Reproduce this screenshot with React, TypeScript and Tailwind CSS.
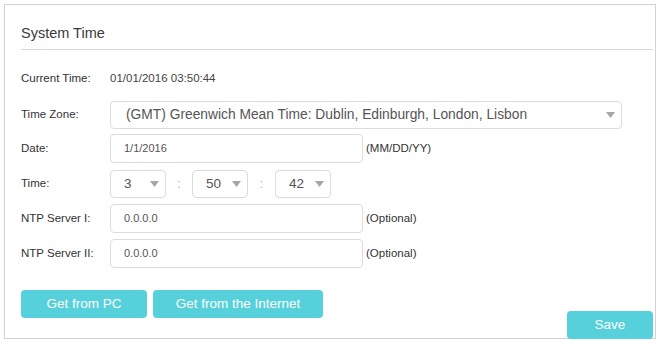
import React from "react";

const font = { fontFamily: '"Liberation Sans", Arial, sans-serif' };

function Caret() {
  return (
    <svg width="9" height="6" viewBox="0 0 9 6" className="shrink-0">
      <path d="M0 0 H9 L4.5 6 Z" fill="#a6a6a6" />
    </svg>
  );
}

function Field({ label, children }: { label: string; children: React.ReactNode }) {
  return (
    <div className="flex items-center">
      <div className="w-[89px] shrink-0 text-[11.5px] text-[#333]">{label}</div>
      {children}
    </div>
  );
}

function TextBox({ value }: { value: string }) {
  return (
    <div className="flex h-[29px] w-[253px] items-center rounded-[4px] border border-[#dcdcdc] pl-[13px] text-[11px] text-[#555]">
      {value}
    </div>
  );
}

function TimeSelect({ value }: { value: string }) {
  return (
    <div className="flex h-[28px] w-[56px] items-center justify-between rounded-[4px] border border-[#dcdcdc] pl-[13px] pr-[6px] text-[13.5px] text-[#555]">
      <span>{value}</span>
      <Caret />
    </div>
  );
}

export default function App() {
  return (
    <div className="min-h-[350px] bg-white p-1" style={font}>
      <div className="relative h-[335px] w-[652px] border border-[#d2d2d2] pl-4 pr-[2px]">
        <div className="mt-[18px] border-b border-[#d9d9d9] pb-[6px] text-[14.5px] leading-[20px] text-[#3a3a3a]">
          System Time
        </div>

        <div className="mt-[21px] flex h-4 items-center">
          <div className="w-[89px] text-[11.5px] text-[#333]">Current Time:</div>
          <div className="text-[11.5px] text-[#444]">01/01/2016 03:50:44</div>
        </div>

        <div className="mt-[14px]">
          <Field label="Time Zone:">
            <div className="flex h-[28px] w-[512px] items-center justify-between rounded-[4px] border border-[#dcdcdc] pl-[15px] pr-[6px] text-[13.8px] text-[#555]">
              <span>(GMT) Greenwich Mean Time: Dublin, Edinburgh, London, Lisbon</span>
              <Caret />
            </div>
          </Field>
        </div>

        <div className="mt-[5px]">
          <Field label="Date:">
            <TextBox value="1/1/2016" />
            <span className="ml-[3px] text-[11.5px] text-[#333]">(MM/DD/YY)</span>
          </Field>
        </div>

        <div className="mt-[7px]">
          <Field label="Time:">
            <TimeSelect value="3" />
            <span className="w-[26px] text-center text-[12px] text-[#aaa]">:</span>
            <TimeSelect value="50" />
            <span className="w-[27px] text-center text-[12px] text-[#aaa]">:</span>
            <TimeSelect value="42" />
          </Field>
        </div>

        <div className="mt-[6px]">
          <Field label="NTP Server I:">
            <TextBox value="0.0.0.0" />
            <span className="ml-[3px] text-[11.5px] text-[#333]">(Optional)</span>
          </Field>
        </div>

        <div className="mt-[6px]">
          <Field label="NTP Server II:">
            <TextBox value="0.0.0.0" />
            <span className="ml-[3px] text-[11.5px] text-[#333]">(Optional)</span>
          </Field>
        </div>

        <div className="mt-[22px] flex gap-[6px]">
          <button className="h-[28px] w-[126px] rounded-[4px] bg-[#56d1dc] text-[13.5px] text-white">
            Get from PC
          </button>
          <button className="h-[28px] w-[170px] rounded-[4px] bg-[#56d1dc] text-[13.5px] text-white">
            Get from the Internet
          </button>
        </div>

        <button className="absolute bottom-[-1px] right-[2px] h-[28px] w-[86px] rounded-[4px] bg-[#56d1dc] text-[13.5px] text-white">
          Save
        </button>
      </div>
    </div>
  );
}
